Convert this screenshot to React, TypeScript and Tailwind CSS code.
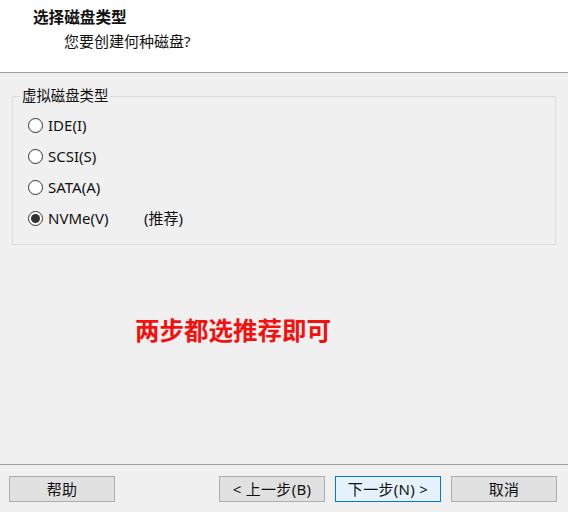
import { useState } from 'react';

const font = { fontFamily: '"Noto Sans", "Noto Sans CJK SC", sans-serif' };

const diskTypes = [
  { id: 'ide', label: 'IDE(I)' },
  { id: 'scsi', label: 'SCSI(S)' },
  { id: 'sata', label: 'SATA(A)' },
  { id: 'nvme', label: 'NVMe(V)', note: '(推荐)' },
];

function Radio({ checked }: { checked: boolean }) {
  return (
    <span className="w-[15px] h-[15px] rounded-full border border-[#333333] bg-white flex items-center justify-center shrink-0">
      {checked && <span className="w-[9px] h-[9px] rounded-full bg-[#333333]" />}
    </span>
  );
}

function WizButton({ label, primary }: { label: string; primary?: boolean }) {
  return (
    <button
      className={
        'w-[106px] h-[26px] text-[15px] leading-none tracking-[0.3px] text-[#111] border ' +
        (primary ? 'bg-[#e5f1fb] border-[#0078d7]' : 'bg-[#e1e1e1] border-[#adadad]')
      }
    >
      {label}
    </button>
  );
}

export default function App() {
  const [selected, setSelected] = useState('nvme');

  return (
    <div className="w-[568px] h-[512px] bg-[#f0f0f0] flex flex-col overflow-hidden text-[#111]" style={font}>
      {/* Header */}
      <div className="h-[73px] bg-white border-b border-[#a0a0a0] shrink-0">
        <div className="pl-[33px] pt-[7px] text-[15.6px] leading-[20px] font-bold">选择磁盘类型</div>
        <div className="pl-[64px] mt-[4px] text-[15px] leading-[20px]">您要创建何种磁盘?</div>
      </div>

      {/* Disk type group */}
      <fieldset className="mx-[12px] mt-[13px] border border-[#dcdcdc] pl-[7px] pb-[10px] w-[544px]">
        <legend className="px-[2px] text-[14.4px] leading-[20px]">虚拟磁盘类型</legend>
        <div className="pt-[4px] pl-[8px] flex flex-col">
          {diskTypes.map((d) => (
            <label
              key={d.id}
              className="h-[31px] flex items-center cursor-default"
              onClick={() => setSelected(d.id)}
            >
              <Radio checked={selected === d.id} />
              <span className="ml-[5px] text-[15px] w-[96px]">{d.label}</span>
              {d.note && <span className="text-[15px]">{d.note}</span>}
            </label>
          ))}
        </div>
      </fieldset>

      {/* Note */}
      <div className="flex-1">
        <div className="pl-[135px] mt-[70px] text-[24.5px] leading-[32px] font-bold text-[#f51010]">
          两步都选推荐即可
        </div>
      </div>

      {/* Footer */}
      <div className="h-[48px] border-t border-[#a0a0a0] shrink-0 flex items-start pt-[11px] pl-[9px] pr-[11px]">
        <WizButton label="帮助" />
        <div className="flex-1" />
        <div className="flex gap-[10px]">
          <WizButton label="< 上一步(B)" />
          <WizButton label="下一步(N) >" primary />
          <WizButton label="取消" />
        </div>
      </div>
    </div>
  );
}
